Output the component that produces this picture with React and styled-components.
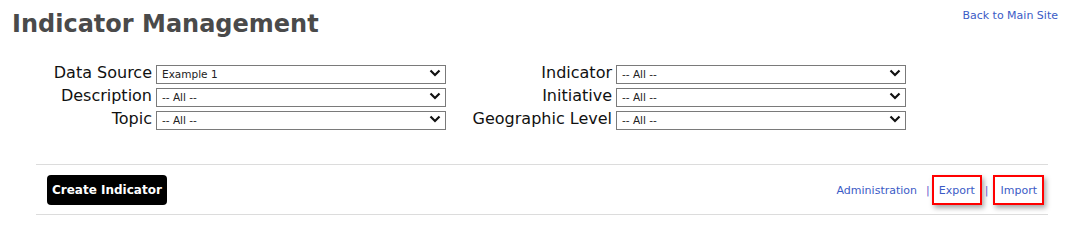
import React from 'react';
import styled, { createGlobalStyle } from 'styled-components';

const GlobalStyle = createGlobalStyle`
    body {
        margin: 0;
        background: #fff;
        font-family: "DejaVu Sans", Verdana, sans-serif;
    }
`;

const filtersLeft = [
    { label: 'Data Source', value: 'Example 1' },
    { label: 'Description', value: '-- All --' },
    { label: 'Topic', value: '-- All --' },
];

const filtersRight = [
    { label: 'Indicator', value: '-- All --' },
    { label: 'Initiative', value: '-- All --' },
    { label: 'Geographic Level', value: '-- All --' },
];

const Chevron = () => (
    <ChevronIcon width="12" height="8" viewBox="0 0 12 8">
        <path d="M1.5 1.5 L6 6 L10.5 1.5" fill="none" stroke="#111" strokeWidth="2.2" />
    </ChevronIcon>
);

const Filter = ({ value }) => (
    <SelectWrap>
        <Select defaultValue={value}>
            <option>{value}</option>
        </Select>
        <Chevron />
    </SelectWrap>
);

export default function App() {
    const rows = filtersLeft.map((left, i) => [left, filtersRight[i]]);

    return (
        <Root>
            <GlobalStyle />
            <Header>
                <Title>Indicator Management</Title>
                <BackLink href="#">Back to Main Site</BackLink>
            </Header>
            <Filters>
                {rows.map(([left, right]) => (
                    <React.Fragment key={left.label}>
                        <Label>{left.label}</Label>
                        <Filter value={left.value} />
                        <Label>{right.label}</Label>
                        <Filter value={right.value} />
                    </React.Fragment>
                ))}
            </Filters>
            <Toolbar>
                <CreateButton>Create Indicator</CreateButton>
                <Links>
                    <TextLink href="#">Administration</TextLink>
                    <Divider>|</Divider>
                    <TextLink href="#" $boxed>Export</TextLink>
                    <Divider $tight>|</Divider>
                    <TextLink href="#" $boxed>Import</TextLink>
                </Links>
            </Toolbar>
        </Root>
    );
}

const Root = styled.div`
    width: 1085px;
    height: 243px;
    overflow: hidden;
`;

const Header = styled.div`
    display: flex;
    justify-content: space-between;
    align-items: flex-start;
    padding: 9px 27px 0 12px;
`;

const Title = styled.h1`
    margin: 0;
    font-size: 24px;
    line-height: 30px;
    font-weight: bold;
    color: #4a4a4a;
`;

const BackLink = styled.a`
    font-size: 11px;
    color: #3b5bc6;
    text-decoration: none;
`;

const Filters = styled.div`
    display: grid;
    grid-template-columns: 116px 290px 162px 290px;
    grid-auto-rows: 19px;
    column-gap: 4px;
    row-gap: 4px;
    margin: 24px 0 0 36px;
`;

const Label = styled.div`
    font-size: 16px;
    line-height: 19px;
    color: #111;
    text-align: right;
    white-space: nowrap;
`;

const SelectWrap = styled.div`
    position: relative;
    height: 19px;
`;

const Select = styled.select`
    appearance: none;
    width: 100%;
    height: 19px;
    margin: 0;
    padding: 0 0 0 5px;
    border: 1px solid #7a7a7a;
    border-radius: 0;
    background: #fff;
    font-family: "DejaVu Sans", Verdana, sans-serif;
    font-size: 10.5px;
    color: #222;
    box-sizing: border-box;
`;

const ChevronIcon = styled.svg`
    position: absolute;
    right: 5px;
    top: 6px;
    pointer-events: none;
`;

const Toolbar = styled.div`
    display: flex;
    justify-content: space-between;
    align-items: center;
    margin: 36px 37px 0 36px;
    padding: 10px 4px 9px 11px;
    border-top: 1px solid #dcdcdc;
    border-bottom: 1px solid #dcdcdc;
`;

const CreateButton = styled.button`
    height: 30px;
    padding: 0 5px;
    border: none;
    border-radius: 4px;
    background: #000;
    color: #fff;
    font-family: "DejaVu Sans", Verdana, sans-serif;
    font-size: 12px;
    font-weight: bold;
`;

const Links = styled.div`
    display: flex;
    align-items: center;
    font-size: 11px;
`;

const Divider = styled.span`
    color: #6a5acd;
    margin: ${({ $tight }) => ($tight ? '0 5px 0 3px' : '0 2px 0 9px')};
`;

const TextLink = styled.a`
    display: flex;
    align-items: center;
    color: #3b5bc6;
    text-decoration: none;
    ${({ $boxed }) => $boxed && `
        height: 30px;
        padding: 0 5px;
        border: 2px solid #f00;
        box-sizing: border-box;
        box-shadow: 2px 3px 5px rgba(0, 0, 0, 0.35);
    `}
`;
